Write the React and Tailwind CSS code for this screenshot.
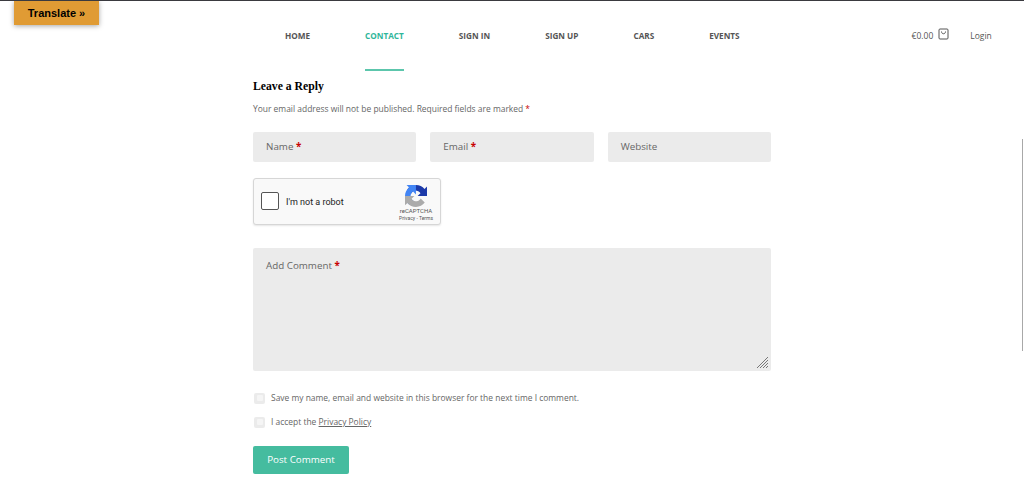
const nav = ["HOME", "CONTACT", "SIGN IN", "SIGN UP", "CARS", "EVENTS"];

function Star() {
  return <span className="text-[#c80000] font-bold">*</span>;
}

function Field({ children }) {
  return (
    <div className="flex-1 h-[30px] bg-[#ebebeb] rounded-[2px] pl-[13px] flex items-center text-[9.8px] text-[#666]">
      <span>{children}</span>
    </div>
  );
}

function Check({ children }) {
  return (
    <div className="flex items-center h-[12px] text-[8.45px] text-[#666]">
      <span className="w-[11px] h-[11px] ml-[1px] mr-[6px] bg-[#ebebeb] rounded-[2px] flex items-center justify-center">
        <span className="w-[6px] h-[6px] bg-[#f5f5f5] rounded-[1px]" />
      </span>
      <span>{children}</span>
    </div>
  );
}

function RecaptchaLogo() {
  return (
    <svg width="22" height="22" viewBox="0 0 64 64">
      <path d="M64 31.955l-.033-1.37V4.687l-7.16 7.16C50.948 4.674 42.033.093 32.05.093c-10.4 0-19.622 4.96-25.458 12.64l11.736 11.86a15.55 15.55 0 0 1 4.754-5.334c2.05-1.6 4.952-2.906 8.968-2.906.485 0 .86.057 1.135.163 4.976.393 9.29 3.14 11.83 7.124l-8.307 8.308 26.3-.003" fill="#1c3aa9" />
      <path d="M31.862.001l-1.37.033H4.593l7.16 7.16C4.58 13.053 0 21.968 0 31.95c0 10.4 4.96 19.622 12.64 25.458l11.86-11.736a15.55 15.55 0 0 1-5.334-4.754c-1.6-2.05-2.906-4.952-2.906-8.968 0-.485.057-.86.163-1.135.393-4.976 3.14-9.29 7.124-11.83l8.308 8.307-.003-26.3" fill="#4285f4" />
      <path d="M.001 31.953l.033 1.37v25.898l7.16-7.16c5.86 7.173 14.775 11.754 24.757 11.754 10.4 0 19.622-4.96 25.458-12.64l-11.736-11.86a15.55 15.55 0 0 1-4.754 5.334c-2.05 1.6-4.952 2.906-8.968 2.906-.485 0-.86-.057-1.135-.163-4.976-.393-9.29-3.14-11.83-7.124l8.307-8.308-26.3.003" fill="#ababab" />
    </svg>
  );
}

export default function App() {
  return (
    <div className="relative w-[1024px] h-[487px] overflow-hidden bg-white border-t border-[#3a3a3f] font-['Open_Sans','Noto_Sans',sans-serif]">
      <div className="absolute left-[14px] top-0 w-[85px] h-[24px] bg-[#e09b34] shadow-[0_1px_5px_rgba(0,0,0,0.35)] flex items-center justify-center text-[11px] font-bold text-black font-['Liberation_Sans',sans-serif]">
        Translate »
      </div>
      <div className="absolute left-[1022px] top-[138px] w-[1px] h-[212px] bg-[#a8a8a8]" />

      <header className="h-[69px] flex pl-[285px] text-[#555]">
        <nav className="flex gap-[55px] text-[8.2px] font-bold">
          {nav.map((n) => (
            <a
              key={n}
              className={
                n === "CONTACT"
                  ? "h-[70px] pt-[28px] flex flex-col leading-[13px] text-[#2fb69a]"
                  : "h-[70px] pt-[28px] flex flex-col leading-[13px]"
              }
            >
              {n}
              {n === "CONTACT" && <span className="mt-auto h-[2px] bg-[#5cc6ac]" />}
            </a>
          ))}
        </nav>
        <div className="ml-[172px] pt-[28px] flex items-start text-[8.5px] leading-[13px]">
          <span>€0.00</span>
          <svg className="ml-[5px] -mt-[1px]" width="11" height="12" viewBox="0 0 11 12" fill="none" stroke="#555" strokeWidth="1">
            <rect x="1" y="1" width="9" height="10" rx="1" />
            <path d="M3.5 3.5 C3.5 6.5 7.5 6.5 7.5 3.5" />
          </svg>
          <span className="ml-[21px]">Login</span>
        </div>
      </header>

      <main className="ml-[253px] w-[518px] flex flex-col">
        <h3 className="mt-[9px] text-[11.7px] leading-[16px] font-bold text-black font-['Liberation_Serif',serif]">
          Leave a Reply
        </h3>
        <p className="mt-[7px] text-[8.45px] leading-[14px] text-[#666]">
          Your email address will not be published. Required fields are marked <span className="text-[#c80000]">*</span>
        </p>
        <div className="mt-[16px] flex gap-[14px]">
          <Field>Name <Star /></Field>
          <Field>Email <Star /></Field>
          <Field>Website</Field>
        </div>
        <div className="mt-[16px] w-[188px] h-[47px] bg-[#f9f9f9] border border-[#d6d6d6] rounded-[3px] shadow-[0_1px_2px_rgba(0,0,0,0.1)] flex items-start font-['Roboto',sans-serif]">
          <span className="mt-[13px] ml-[7px] w-[18px] h-[18px] bg-white border-[1.5px] border-[#555] rounded-[2px]" />
          <span className="mt-[17px] ml-[7px] text-[9px] leading-[12px] text-[#222]">I'm not a robot</span>
          <div className="ml-auto mr-[7px] pt-[6px] flex flex-col items-center">
            <RecaptchaLogo />
            <span className="text-[6px] leading-[8px] text-[#555]">reCAPTCHA</span>
            <span className="text-[5px] leading-[7px] text-[#555]">Privacy - Terms</span>
          </div>
        </div>
        <div className="relative mt-[23px] h-[123px] bg-[#ebebeb] rounded-[2px] pl-[13px] pt-[10px] text-[9.8px] leading-[15px] text-[#666]">
          Add Comment <Star />
          <svg className="absolute right-[3px] bottom-[3px]" width="11" height="11" viewBox="0 0 11 11" stroke="#777" strokeWidth="1">
            <path d="M0 11 L11 0 M3 11 L11 3 M6 11 L11 6 M9 11 L11 9" />
          </svg>
        </div>
        <div className="mt-[21px]">
          <Check>Save my name, email and website in this browser for the next time I comment.</Check>
        </div>
        <div className="mt-[12px]">
          <Check>I accept the <span className="underline">Privacy Policy</span></Check>
        </div>
        <button className="mt-[18px] w-[96px] h-[28px] bg-[#45bc9f] rounded-[2px] text-white text-[9.8px]">
          Post Comment
        </button>
      </main>
    </div>
  );
}
